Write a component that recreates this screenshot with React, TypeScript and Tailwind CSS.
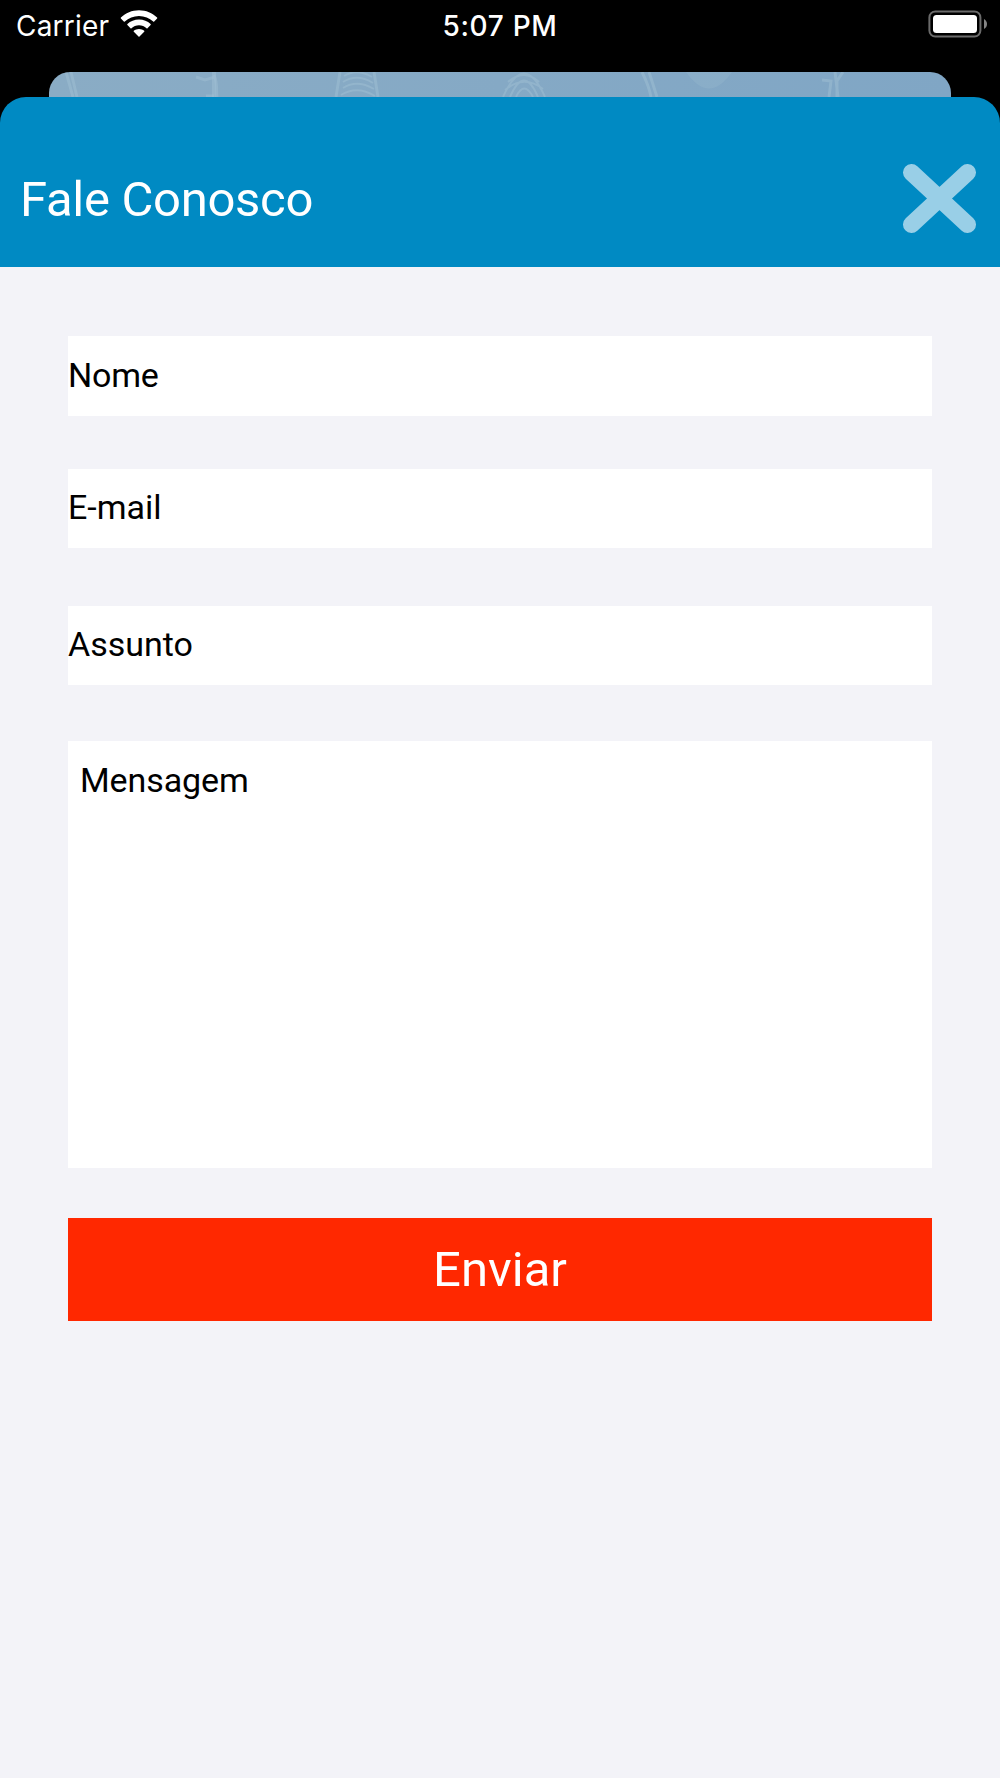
interface FieldProps {
  label: string;
  className: string;
}

function Field({ label, className }: FieldProps) {
  return (
    <label className={`flex w-full bg-white text-black text-[34px] leading-[40px] ${className}`}>
      <span>{label}</span>
    </label>
  );
}

function WifiIcon() {
  return (
    <svg width="38" height="28" viewBox="0 0 38 28" fill="#fff">
      <path d="M19 0.3C26 0.3 32.400 3 37.100 7.600C37.400 7.900 37.400 8.300 37.100 8.600L34.200 11.600C33.900 11.900 33.500 11.900 33.200 11.600C29.400 8 24.500 5.900 19 5.900C13.500 5.900 8.600 8 4.800 11.600C4.500 11.900 4.100 11.900 3.800 11.600L0.900 8.600C0.600 8.300 0.600 7.900 0.900 7.600C5.600 3 12 0.300 19 0.300Z" />
      <path d="M19 9.600C23.500 9.600 27.500 11.300 30.600 14.100C30.900 14.400 30.900 14.800 30.600 15.100L27.500 18.200C27.200 18.500 26.800 18.500 26.500 18.200C24.500 16.400 21.900 15.300 19 15.300C16.100 15.300 13.500 16.400 11.500 18.200C11.200 18.500 10.800 18.500 10.500 18.200L7.400 15.100C7.100 14.800 7.100 14.400 7.400 14.100C10.500 11.300 14.500 9.600 19 9.600Z" />
      <path d="M19 18.900C21 18.900 22.800 19.600 24.200 20.700C24.500 21 24.500 21.400 24.200 21.700L19.500 26.500C19.200 26.800 18.800 26.800 18.500 26.500L13.800 21.700C13.500 21.400 13.500 21 13.800 20.700C15.200 19.600 17 18.900 19 18.900Z" />
    </svg>
  );
}

function BatteryIcon() {
  return (
    <svg width="60" height="28" viewBox="0 0 60 28">
      <rect x="2.400" y="1.400" width="51" height="25.200" rx="6" fill="none" stroke="#6b6b6b" strokeWidth="2" />
      <rect x="6" y="5" width="44" height="18" rx="3.500" fill="#fff" />
      <path d="M57 9C61 11 61 17 57 19Z" fill="#858585" />
    </svg>
  );
}

function StatusBar() {
  return (
    <div className="grid grid-cols-3 items-start h-[72px] text-white font-['Inter',sans-serif] text-[28px] leading-[34px]">
      <div className="flex pl-4 pt-[9px]">
        <span className="w-[104px] tracking-[0.200px]">Carrier</span>
        <div className="pt-[1px]">
          <WifiIcon />
        </div>
      </div>
      <div className="pt-[9px] text-center font-medium tracking-[0.700px]">5:07 PM</div>
      <div className="flex justify-end pt-[10px] pr-[13px]">
        <BatteryIcon />
      </div>
    </div>
  );
}

// Strip of the screen that stays visible behind the modal
function PreviousScreen() {
  return (
    <div className="mx-[49px] h-[25px] overflow-hidden rounded-t-[21px] bg-linear-to-r from-[#8aacc5] to-[#80a6c5]">
      <svg width="902" height="25" viewBox="0 0 902 25" fill="none" stroke="#a0bfd3" strokeOpacity="0.5" strokeWidth="2">
        <path d="M17 0L24 25M22 0L28 25" strokeWidth="3" />
        <path d="M147 5L156 8L166 5M165 3C169 12 167 18 168 25M157 24L165 24" strokeWidth="3" />
        <path d="M165 0V25" strokeWidth="4" />
        <path d="M291 0L287 25M325 0L329 25" strokeWidth="3" />
        <path d="M295 4Q308-4 323 5M294 10Q308 1 324 11M294 16Q308 7 325 17M292 23Q308 13 326 24" />
        <path d="M454 25Q475-22 496 25M461 25Q475-8 489 25M467 25Q475 8 484 25M456 18Q475 2 494 17M459 10Q475-4 490 10" />
        <path d="M593 0Q600 14 602 25M600 0L608 25" strokeWidth="3" />
        <path d="M637 0Q660 33 683 0Z" fill="#a0bfd3" fillOpacity="0.25" stroke="none" />
        <path d="M773 8L782 9L780 25M786 0L789 25M794 0L788 9V25" strokeWidth="3" />
      </svg>
    </div>
  );
}

function Header() {
  return (
    <header className="flex items-center justify-between h-[170px] pt-8 pl-5 pr-6 rounded-t-[26px] bg-[#008ac3]">
      <h1 className="pt-[3px] text-[49px] leading-[56px] text-white tracking-[-0.300px]">Fale Conosco</h1>
      <button aria-label="Fechar">
        <svg width="73" height="69" viewBox="0 0 73 69">
          <path d="M8.500 8.500L64.500 60.500M64.500 8.500L8.500 60.500" stroke="#99cfe7" strokeWidth="17" strokeLinecap="round" />
        </svg>
      </button>
    </header>
  );
}

export default function App() {
  return (
    <div className="w-[1000px] h-[1778px] overflow-hidden bg-[#f3f3f8] font-['Roboto',sans-serif]">
      <div className="bg-black">
        <StatusBar />
        <PreviousScreen />
        <Header />
      </div>
      <form className="flex flex-col px-[68px] pt-[69px]">
        <Field label="Nome" className="h-[80px] pb-[2px] items-center tracking-[-0.200px]" />
        <Field label="E-mail" className="h-[79px] mt-[53px] pb-[3px] items-center" />
        <Field label="Assunto" className="h-[79px] mt-[58px] pb-[3px] items-center" />
        <Field label="Mensagem" className="h-[427px] mt-[56px] pt-[19px] pl-3 tracking-[-0.100px]" />
        <button type="button" className="h-[103px] mt-[50px] bg-[#ff2800] text-white text-[49px] leading-[56px]">
          Enviar
        </button>
      </form>
    </div>
  );
}
